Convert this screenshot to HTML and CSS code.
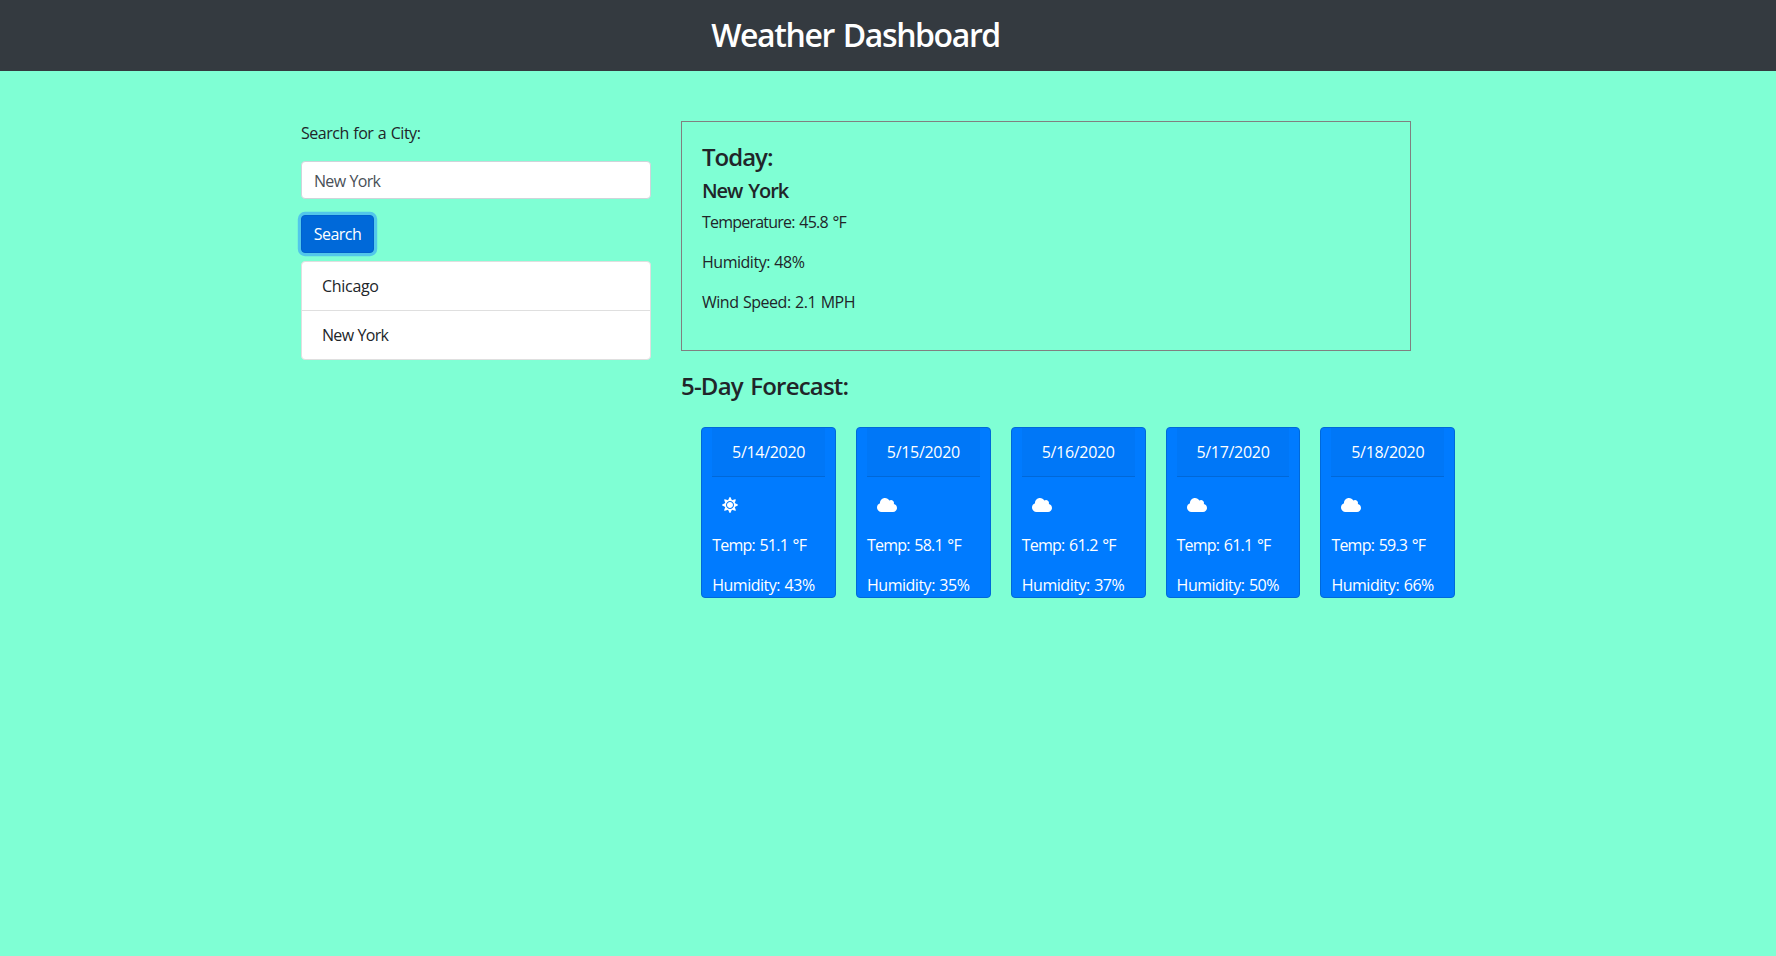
FILE: index.html
```html
<!DOCTYPE html>
<html lang="en">
<head>
<meta charset="utf-8">
<title>Weather Dashboard</title>
<link rel="stylesheet" href="styles.css">
</head>
<body>
<svg class="defs" width="0" height="0" aria-hidden="true">
<symbol id="sun" viewBox="0 0 512 512"><path d="M256 160c-52.9 0-96 43.1-96 96s43.1 96 96 96 96-43.1 96-96-43.1-96-96-96zm246.4 80.5l-94.7-47.3 33.5-100.4c4.5-13.6-8.4-26.5-21.9-21.9l-100.4 33.5-47.4-94.8c-6.4-12.8-24.6-12.8-31 0l-47.3 94.7L92.7 70.8c-13.6-4.5-26.5 8.4-21.9 21.9l33.5 100.4-94.7 47.4c-12.8 6.4-12.8 24.6 0 31l94.7 47.3-33.5 100.5c-4.5 13.6 8.4 26.5 21.9 21.9l100.4-33.5 47.3 94.7c6.4 12.8 24.6 12.8 31 0l47.3-94.7 100.4 33.5c13.6 4.5 26.5-8.4 21.9-21.9l-33.5-100.4 94.7-47.3c13-6.5 13-24.7.2-31.1zm-155.9 106c-49.9 49.9-131.1 49.9-181 0-49.9-49.9-49.9-131.1 0-181 49.9-49.9 131.1-49.9 181 0 49.9 49.9 49.9 131.1 0 181z"/></symbol>
<symbol id="cloud" viewBox="0 0 640 512"><path d="M537.6 226.6c4.1-10.7 6.4-22.4 6.4-34.6 0-53-43-96-96-96-19.7 0-38.1 6-53.3 16.2C367 64.2 315.3 32 256 32c-88.4 0-160 71.6-160 160 0 2.7.1 5.4.2 8.1C40.2 219.8 0 273.2 0 336c0 79.5 64.5 144 144 144h368c70.7 0 128-57.3 128-128 0-61.9-44-113.6-102.4-125.4z"/></symbol>
</svg>
<header class="navbar"><h1 class="title">Weather Dashboard</h1></header>
<main class="container">
<aside class="sidebar">
<p class="label">Search for a City:</p>
<input class="city-input" type="text" value="New York" aria-label="City">
<button class="search-btn" type="button">Search</button>
<ul class="history"><li>Chicago</li><li class="tight">New York</li></ul>
</aside>
<section class="content">
<div class="today">
<h4>Today:</h4>
<h5>New York</h5>
<p class="temp">Temperature: 45.8 °F</p>
<p>Humidity: 48%</p>
<p>Wind Speed: 2.1 MPH</p>
</div>
<h4 class="forecast-title">5-Day Forecast:</h4>
<div class="forecast">
<article class="card"><div class="date">5/14/2020</div><svg class="icon sun"><use href="#sun"/></svg><p class="temp">Temp: 51.1 °F</p><p>Humidity: 43%</p></article>
<article class="card"><div class="date">5/15/2020</div><svg class="icon"><use href="#cloud"/></svg><p class="temp">Temp: 58.1 °F</p><p>Humidity: 35%</p></article>
<article class="card"><div class="date">5/16/2020</div><svg class="icon"><use href="#cloud"/></svg><p class="temp">Temp: 61.2 °F</p><p>Humidity: 37%</p></article>
<article class="card"><div class="date">5/17/2020</div><svg class="icon"><use href="#cloud"/></svg><p class="temp">Temp: 61.1 °F</p><p>Humidity: 50%</p></article>
<article class="card"><div class="date">5/18/2020</div><svg class="icon"><use href="#cloud"/></svg><p class="temp">Temp: 59.3 °F</p><p>Humidity: 66%</p></article>
</div>
</section>
</main>
</body>
</html>
```
FILE: styles.css
```css
* { box-sizing: border-box; }
body {
  margin: 0;
  background: #7fffd4;
  color: #212529;
  font: 400 16px/24px "Segoe UI", "Open Sans", "Noto Sans", sans-serif;
  letter-spacing: -0.48px;
  word-spacing: 0.8px;
}
h1, h4, h5, p, ul { margin: 0; padding: 0; }
h1, h4, h5 { font-weight: 600; }
.defs { display: none; }
.navbar {
  display: flex;
  justify-content: center;
  align-items: center;
  height: 71px;
  padding: 0 65px 1px 0;
  background: #343a40;
}
.title { color: #fff; font-size: 32px; line-height: 38px; letter-spacing: -1.4px; word-spacing: 2px; }
.container {
  display: grid;
  grid-template-columns: 350px 730px;
  column-gap: 30px;
  margin: 50px 0 0 301px;
}
.sidebar { display: flex; flex-direction: column; align-items: flex-start; }
.city-input {
  width: 100%;
  height: 38px;
  margin: 16px 0;
  padding: 7px 12px 5px;
  border: 1px solid #ced4da;
  border-radius: 4px;
  background: #fff;
  color: #495057;
  font: inherit;
  letter-spacing: -0.7px;
  word-spacing: inherit;
}
.search-btn {
  width: 73px;
  height: 38px;
  padding: 0;
  border: 1px solid #0062cc;
  border-radius: 4px;
  background: #0069d9;
  box-shadow: 0 0 0 3.2px rgba(38, 143, 255, 0.5);
  color: #fff;
  font: inherit;
  letter-spacing: -0.55px;
}
.history {
  width: 100%;
  margin-top: 8px;
  border: 1px solid #dfdfdf;
  border-radius: 4px;
  background: #fff;
  letter-spacing: -0.3px;
  list-style: none;
}
.history li { padding: 12px 20px; }
.history li + li { border-top: 1px solid #dfdfdf; }
.history .tight { letter-spacing: -0.7px; }
.today { height: 230px; padding: 20px; border: 1px solid #808080; }
h4 { margin-bottom: 8px; font-size: 24px; line-height: 29px; letter-spacing: -1px; word-spacing: 2px; }
h5 { margin-bottom: 7px; font-size: 20px; line-height: 24px; letter-spacing: -1.1px; word-spacing: 2px; }
.today p { margin-bottom: 16px; }
.temp { letter-spacing: -0.78px; word-spacing: 1.2px; }
.forecast-title { margin-top: 20px; letter-spacing: -0.8px; }
.forecast {
  display: grid;
  grid-template-columns: repeat(5, 134.8px);
  column-gap: 20px;
  margin: 27px 0 0 20.2px;
}
.card {
  display: flex;
  flex-direction: column;
  height: 171px;
  padding: 0 10px;
  border: 1px solid #0069d9;
  border-radius: 4px;
  background: #007bff;
  color: #fff;
}
.date {
  height: 49px;
  padding: 12px 0;
  border-bottom: 1px solid rgba(0, 0, 0, 0.125);
  background: rgba(0, 0, 0, 0.03);
  letter-spacing: -0.3px;
  text-align: center;
}
.icon { width: 20px; height: 16px; margin: 20px 0 20px 10px; fill: #fff; flex: none; }
.icon.sun { width: 16px; }
.card p + p { margin-top: 16px; }
```
